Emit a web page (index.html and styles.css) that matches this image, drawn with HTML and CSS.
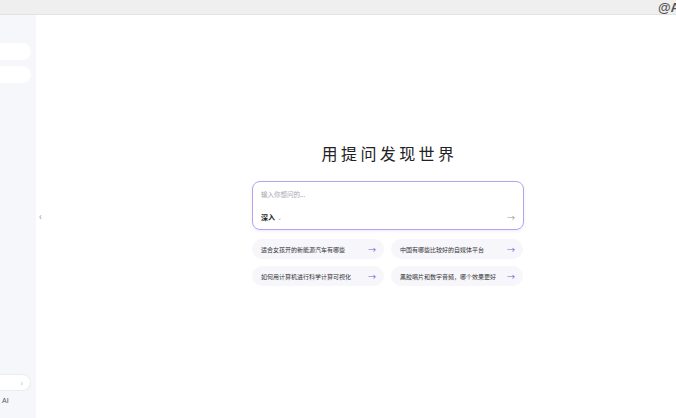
FILE: index.html
```html
<!DOCTYPE html>
<html lang="zh">
<head>
<meta charset="utf-8">
<link rel="stylesheet" href="styles.css">
</head>
<body>
<div class="topbar"><span class="handle">@A</span></div>
<div class="app">
  <aside class="sidebar">
    <div class="side-top">
      <div class="pill"></div>
      <div class="pill"></div>
    </div>
    <div class="side-bottom">
      <div class="pill outlined"><span class="chev">›</span></div>
      <div class="brand">AI</div>
    </div>
  </aside>
  <main class="main">
    <div class="collapse">‹</div>
    <div class="center">
      <h1 class="title">用提问发现世界</h1>
      <div class="ask">
        <div class="placeholder">输入你想问的...</div>
        <div class="ask-bottom">
          <span class="mode">深入 <span class="caret">⌄</span></span>
          <span class="send">→</span>
        </div>
      </div>
      <div class="chips">
        <div class="chip"><span>适合女孩开的新能源汽车有哪些</span><span class="arr">→</span></div>
        <div class="chip"><span>中国有哪些比较好的自媒体平台</span><span class="arr">→</span></div>
        <div class="chip"><span>如何用计算机进行科学计算可视化</span><span class="arr">→</span></div>
        <div class="chip"><span>黑胶唱片和数字音频，哪个效果更好</span><span class="arr">→</span></div>
      </div>
    </div>
  </main>
</div>
</body>
</html>
```

FILE: styles.css
```css
* { box-sizing: border-box; margin: 0; padding: 0; }
html, body { width: 676px; height: 418px; overflow: hidden; }
body {
  font-family: "Noto Sans CJK SC", "Noto Sans", sans-serif;
  background: #ffffff;
  color: #222;
}
.topbar {
  height: 15px;
  background: #efefef;
  border-bottom: 1px solid #e2e2e2;
  display: flex;
  justify-content: flex-end;
  align-items: center;
  overflow: hidden;
}
.handle {
  font-family: "Liberation Sans", sans-serif;
  font-weight: bold;
  font-size: 13px;
  color: #555;
  margin-right: -4px;
  line-height: 15px;
}
.app {
  display: flex;
  height: 403px;
}
.sidebar {
  width: 36px;
  background: #f6f7fa;
  display: flex;
  flex-direction: column;
  justify-content: space-between;
  padding: 28px 0 6px 0;
}
.side-top { display: flex; flex-direction: column; gap: 6px; }
.pill {
  height: 17px;
  width: 31px;
  background: #ffffff;
  border-radius: 0 9px 9px 0;
}
.pill.outlined {
  border: 1px solid #ebecf0;
  border-left: none;
  display: flex;
  align-items: center;
  justify-content: flex-end;
  padding-right: 7px;
}
.chev { font-size: 8px; color: #aaa; line-height: 1; }
.side-bottom { display: flex; flex-direction: column; gap: 6px; }
.brand {
  font-family: "Liberation Sans", sans-serif;
  font-size: 7px;
  color: #555;
  padding-left: 2px;
  margin-bottom: 8px;
}
.main {
  flex: 1;
  position: relative;
  padding-left: 216px;
  padding-top: 128px;
}
.collapse {
  position: absolute;
  left: 3px;
  top: 196px;
  font-size: 10px;
  color: #999;
  line-height: 1;
}
.center { width: 272px; }
.title {
  text-align: center;
  font-size: 16px;
  font-weight: 400;
  letter-spacing: 3.4px;
  color: #222;
  line-height: 20px;
  margin-bottom: 18px;
  padding-left: 3px;
}
.ask {
  height: 49px;
  border: 1px solid #b7a3ea;
  border-radius: 8px;
  padding: 7px 8px 6px 8px;
  display: flex;
  flex-direction: column;
  justify-content: space-between;
  box-shadow: 0 1px 3px rgba(140, 110, 220, 0.15);
}
.placeholder { font-size: 6.5px; color: #a8a8b0; line-height: 10px; }
.ask-bottom { display: flex; justify-content: space-between; align-items: center; }
.mode { font-size: 7px; color: #222; font-weight: 600; line-height: 10px; }
.caret { font-size: 6px; color: #aaa; font-weight: 400; }
.send { font-size: 8px; color: #999; line-height: 10px; }
.chips {
  margin-top: 9px;
  display: grid;
  grid-template-columns: 132px 132px;
  column-gap: 7px;
  row-gap: 7px;
}
.chip {
  height: 20px;
  background: #f6f6fb;
  border-radius: 10px;
  display: flex;
  align-items: center;
  justify-content: space-between;
  padding: 0 8px 0 9px;
  font-size: 6px;
  color: #333;
}
.arr { color: #7c5fd8; font-size: 8px; }
```
